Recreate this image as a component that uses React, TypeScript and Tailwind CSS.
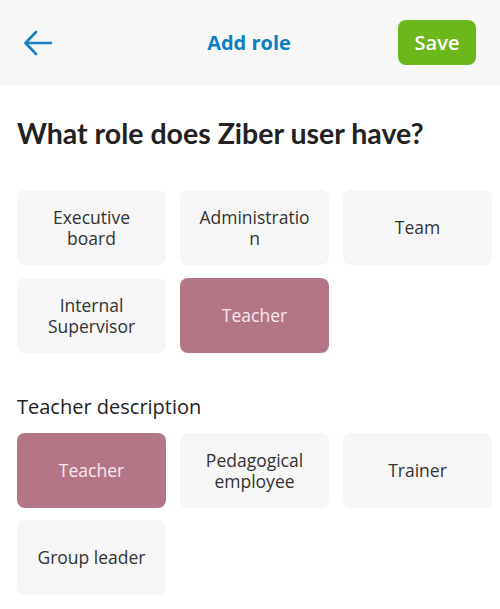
import { useState } from "react";

const roles = ["Executive board", "Administration", "Team", "Internal Supervisor", "Teacher"];
const descriptions = ["Teacher", "Pedagogical employee", "Trainer", "Group leader"];

function Tile({ label, selected, onClick }: { label: string; selected: boolean; onClick: () => void }) {
    return (
        <button
            type="button"
            onClick={onClick}
            className={`h-[75px] rounded-[8px] px-[18px] flex items-center justify-center text-center text-[17.5px] leading-[21px] ${
                selected ? "bg-[#b47587] text-[#f6e9ed]" : "bg-[#f6f6f6] text-[#333333]"
            }`}
        >
            <span className="min-w-0 [overflow-wrap:anywhere]">{label}</span>
        </button>
    );
}

export default function App() {
    const [role, setRole] = useState("Teacher");
    const [desc, setDesc] = useState("Teacher");

    return (
        <main className="w-[500px] h-[609px] bg-white font-['Open_Sans',sans-serif] overflow-hidden">
            <header className="h-[85px] bg-[#f7f7f7] grid grid-cols-[1fr_auto_1fr] items-center pl-[22px] pr-[24px]">
                <button type="button" className="w-[32px] h-[32px] flex items-center justify-center">
                    <svg width="30" height="26" viewBox="0 0 30 26" fill="none" stroke="#1a7fc0" strokeWidth="2.6" strokeLinecap="round" strokeLinejoin="round">
                        <path d="M28 13H3" />
                        <path d="M13 2L2.5 13L13 24" />
                    </svg>
                </button>
                <h1 className="text-[20px] font-bold text-[#0a7fc2]">Add role</h1>
                <div className="flex justify-end">
                    <button type="button" className="w-[78px] h-[45px] rounded-[8px] bg-[#6bb81d] text-white text-[20px] font-semibold">
                        Save
                    </button>
                </div>
            </header>

            <section className="pl-[17px] pr-[8px]">
                <h2 className="mt-[30px] text-[28.5px] font-bold text-[#222222] font-['Lato',sans-serif] leading-[36px]">
                    What role does Ziber user have?
                </h2>

                <div className="mt-[39px] grid grid-cols-3 gap-x-[14px] gap-y-[13px]">
                    {roles.map((r) => (
                        <Tile key={r} label={r} selected={role === r} onClick={() => setRole(r)} />
                    ))}
                </div>

                <h3 className="mt-[41px] text-[20px] font-medium text-[#222222] leading-[26px]">Teacher description</h3>

                <div className="mt-[13px] grid grid-cols-3 gap-x-[14px] gap-y-[12px]">
                    {descriptions.map((d) => (
                        <Tile key={d} label={d} selected={desc === d} onClick={() => setDesc(d)} />
                    ))}
                </div>
            </section>
        </main>
    );
}
